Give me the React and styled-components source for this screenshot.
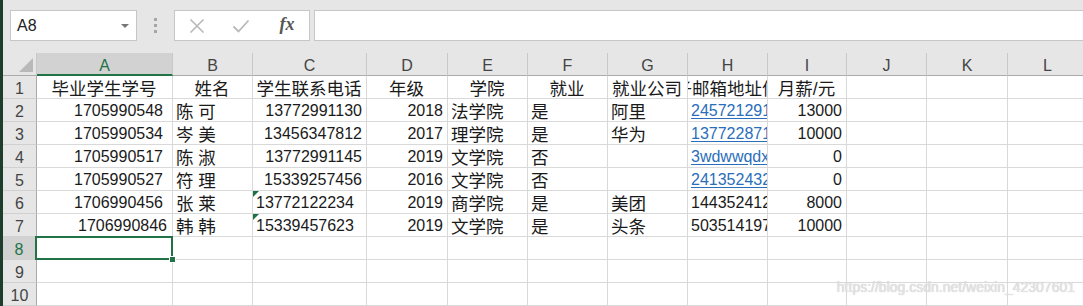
import React from 'react'
import styled, { createGlobalStyle } from 'styled-components'

const GlobalStyle = createGlobalStyle`
  html, body {
    margin: 0;
    padding: 0;
    background: #ffffff;
  }
  body {
    font-family: 'Liberation Sans', 'Noto Sans CJK SC', sans-serif;
    overflow: hidden;
  }
`

const COLUMNS = [
  { key: 'A', width: 136 },
  { key: 'B', width: 80 },
  { key: 'C', width: 114 },
  { key: 'D', width: 81 },
  { key: 'E', width: 80 },
  { key: 'F', width: 80 },
  { key: 'G', width: 80 },
  { key: 'H', width: 80 },
  { key: 'I', width: 79 },
  { key: 'J', width: 80 },
  { key: 'K', width: 81 },
  { key: 'L', width: 80 },
]

const c = (t, a = 'l', extra = {}) => ({ t, a, ...extra })

const ROWS = [
  [
    c('毕业学生学号', 'c', { cjk: true }),
    c('姓名', 'c', { cjk: true }),
    c('学生联系电话', 'c', { cjk: true }),
    c('年级', 'c', { cjk: true }),
    c('学院', 'c', { cjk: true }),
    c('就业', 'c', { cjk: true }),
    c('就业公司', 'c', { cjk: true }),
    c('电子邮箱地址信息', 'c', { cjk: true }),
    c('月薪/元', 'c', { cjk: true }),
  ],
  [
    c('1705990548', 'r', { pad: 9 }),
    c('陈 可', 'l', { cjk: true }),
    c('13772991130', 'r'),
    c('2018', 'r'),
    c('法学院', 'l', { cjk: true }),
    c('是', 'l', { cjk: true }),
    c('阿里', 'l', { cjk: true }),
    c('2457212913@qq.com', 'l', { link: true }),
    c('13000', 'r'),
  ],
  [
    c('1705990534', 'r', { pad: 9 }),
    c('岑 美', 'l', { cjk: true }),
    c('13456347812', 'r'),
    c('2017', 'r'),
    c('理学院', 'l', { cjk: true }),
    c('是', 'l', { cjk: true }),
    c('华为', 'l', { cjk: true }),
    c('1377228713@qq.com', 'l', { link: true }),
    c('10000', 'r'),
  ],
  [
    c('1705990517', 'r', { pad: 9 }),
    c('陈 淑', 'l', { cjk: true }),
    c('13772991145', 'r'),
    c('2019', 'r'),
    c('文学院', 'l', { cjk: true }),
    c('否', 'l', { cjk: true }),
    c(''),
    c('3wdwwqdx@qq.com', 'l', { link: true }),
    c('0', 'r'),
  ],
  [
    c('1705990527', 'r', { pad: 9 }),
    c('符 理', 'l', { cjk: true }),
    c('15339257456', 'r'),
    c('2016', 'r'),
    c('文学院', 'l', { cjk: true }),
    c('否', 'l', { cjk: true }),
    c(''),
    c('2413524323@qq.com', 'l', { link: true }),
    c('0', 'r'),
  ],
  [
    c('1706990456', 'r', { pad: 9 }),
    c('张 莱', 'l', { cjk: true }),
    c('13772122234', 'l', { flag: true }),
    c('2019', 'r'),
    c('商学院', 'l', { cjk: true }),
    c('是', 'l', { cjk: true }),
    c('美团', 'l', { cjk: true }),
    c('1443524123@qq.com', 'l'),
    c('8000', 'r'),
  ],
  [
    c('1706990846', 'r', { pad: 5 }),
    c('韩 韩', 'l', { cjk: true }),
    c('15339457623', 'l', { flag: true }),
    c('2019', 'r'),
    c('文学院', 'l', { cjk: true }),
    c('是', 'l', { cjk: true }),
    c('头条', 'l', { cjk: true }),
    c('5035141972@qq.com', 'l'),
    c('10000', 'r'),
  ],
  [], [], [],
]

const JUSTIFY = { l: 'flex-start', c: 'center', r: 'flex-end' }

const App = () => {
  return (
    <Window>
      <GlobalStyle />
      <Edge />
      <Main>
        <FormulaBar>
          <NameBox>
            <span>A8</span>
            <DropArrow />
          </NameBox>
          <Grip>
            <i /><i /><i />
          </Grip>
          <FormulaTools>
            <ToolIcon>
              <svg width='16' height='14' viewBox='0 0 16 14'>
                <path d='M1.5 0.5 L14.5 13.5 M14.5 0.5 L1.5 13.5' stroke='#b9b9b9' strokeWidth='1.6' fill='none' />
              </svg>
            </ToolIcon>
            <ToolIcon>
              <svg width='18' height='14' viewBox='0 0 18 14'>
                <path d='M1.5 7.5 L6.5 12.5 L16.5 1.5' stroke='#b9b9b9' strokeWidth='1.8' fill='none' />
              </svg>
            </ToolIcon>
            <Fx>fx</Fx>
          </FormulaTools>
          <FormulaInput />
        </FormulaBar>

        <Sheet>
          <Corner />
          {COLUMNS.map((col) => (
            <ColHead key={col.key} $active={col.key === 'A'}>
              {col.key}
            </ColHead>
          ))}
          {ROWS.map((row, ri) => (
            <React.Fragment key={ri}>
              <RowHead $active={ri === 7}>{ri + 1}</RowHead>
              {COLUMNS.map((col, ci) => {
                const cell = row[ci] || { t: '', a: 'l' }
                return (
                  <Cell
                    key={col.key}
                    $align={JUSTIFY[cell.a]}
                    $cjk={cell.cjk}
                    $pad={cell.pad}
                    $flag={cell.flag}
                    $selected={ri === 7 && ci === 0}
                  >
                    {cell.link ? <Link>{cell.t}</Link> : <span>{cell.t}</span>}
                  </Cell>
                )
              })}
            </React.Fragment>
          ))}
        </Sheet>
        <Watermark>https://blog.csdn.net/weixin_42307601</Watermark>
      </Main>
    </Window>
  )
}

const Window = styled.div`
  display: flex;
  width: 1083px;
  height: 306px;
  overflow: hidden;
  background: #ffffff;
`

const Edge = styled.div`
  width: 3px;
  flex: none;
  background: #1f3d2c;
`

const Main = styled.div`
  flex: 1;
  min-width: 0;
  display: flex;
  flex-direction: column;
  position: relative;
`

const FormulaBar = styled.div`
  height: 53px;
  box-sizing: border-box;
  padding: 10px 0 0 7px;
  display: flex;
  align-items: flex-start;
  background: #e6e6e6;
`

const NameBox = styled.div`
  width: 127px;
  height: 31px;
  box-sizing: border-box;
  border: 1px solid #c6c6c6;
  background: #ffffff;
  display: flex;
  align-items: center;
  justify-content: space-between;
  padding: 0 7px 0 6px;
  font-size: 16px;
  color: #222;
`

const DropArrow = styled.span`
  width: 0;
  height: 0;
  border-left: 4px solid transparent;
  border-right: 4px solid transparent;
  border-top: 4px solid #777;
`

const Grip = styled.div`
  width: 37px;
  height: 31px;
  display: flex;
  flex-direction: column;
  align-items: center;
  justify-content: center;
  gap: 3px;

  i {
    width: 3px;
    height: 3px;
    background: #a6a6a6;
  }
`

const FormulaTools = styled.div`
  width: 136px;
  height: 31px;
  box-sizing: border-box;
  border: 1px solid #c6c6c6;
  background: #ffffff;
  margin-right: 4px;
  display: grid;
  grid-template-columns: repeat(3, 44px);
  align-items: center;
  justify-items: center;
`

const ToolIcon = styled.span`
  display: flex;
  justify-content: center;
`

const Fx = styled.span`
  font-family: 'Liberation Serif', serif;
  font-style: italic;
  font-weight: bold;
  font-size: 18px;
  color: #555;
  padding: 0 0 3px 4px;
`

const FormulaInput = styled.div`
  flex: 1;
  height: 31px;
  box-sizing: border-box;
  border: 1px solid #c6c6c6;
  border-right: none;
  background: #ffffff;
`

const Sheet = styled.div`
  display: grid;
  grid-template-columns: 34px ${COLUMNS.map((col) => col.width + 'px').join(' ')};
  grid-auto-rows: 23px;
`

const Corner = styled.div`
  position: relative;
  background: #e6e6e6;
  border-right: 1px solid #c8c8c8;
  border-bottom: 1px solid #ababab;
  box-sizing: border-box;

  &::after {
    content: '';
    position: absolute;
    right: 3px;
    bottom: 3px;
    border-left: 14px solid transparent;
    border-bottom: 14px solid #b9b9b9;
  }
`

const ColHead = styled.div`
  box-sizing: border-box;
  display: flex;
  align-items: center;
  justify-content: center;
  padding-top: 4px;
  font-size: 16px;
  color: ${(p) => (p.$active ? '#217346' : '#444')};
  background: ${(p) => (p.$active ? '#d2d2d2' : '#e6e6e6')};
  border-right: 1px solid #c8c8c8;
  border-bottom: ${(p) => (p.$active ? '2px solid #217346' : '1px solid #ababab')};
`

const RowHead = styled.div`
  box-sizing: border-box;
  display: flex;
  align-items: center;
  justify-content: center;
  padding-top: 3px;
  font-size: 16px;
  color: ${(p) => (p.$active ? '#217346' : '#444')};
  background: ${(p) => (p.$active ? '#d2d2d2' : '#e6e6e6')};
  border-right: ${(p) => (p.$active ? '2px solid #217346' : '1px solid #ababab')};
  border-bottom: 1px solid #d0d0d0;
`

const Cell = styled.div`
  position: relative;
  box-sizing: border-box;
  display: flex;
  align-items: center;
  justify-content: ${(p) => p.$align};
  padding: 1px ${(p) => (p.$pad ? p.$pad : 4)}px 0 3px;
  overflow: hidden;
  white-space: nowrap;
  font-size: ${(p) => (p.$cjk ? '17.5px' : '16px')};
  color: #1a1a1a;
  border-right: 1px solid #d9d9d9;
  border-bottom: 1px solid #d9d9d9;
  ${(p) => p.$selected && `overflow: visible; z-index: 2;`}

  &::before {
    content: '';
    display: ${(p) => (p.$flag ? 'block' : 'none')};
    position: absolute;
    top: 0;
    left: 0;
    border-top: 6px solid #1e7145;
    border-right: 6px solid transparent;
  }

  &::after {
    content: '';
    display: ${(p) => (p.$selected ? 'block' : 'none')};
    position: absolute;
    inset: -1px -1px -1px -2px;
    border: 2px solid #217346;
  }

  ${(p) =>
    p.$selected &&
    `
    & > span::after {
      content: '';
      position: absolute;
      right: -4px;
      bottom: -4px;
      width: 5px;
      height: 5px;
      background: #217346;
      border: 1px solid #ffffff;
      z-index: 3;
    }
  `}
`

const Link = styled.span`
  color: #2a6ebb;
  text-decoration: underline;
  text-underline-offset: 2px;
`

const Watermark = styled.div`
  position: absolute;
  right: 8px;
  bottom: 11px;
  font-size: 14px;
  color: #e4e4e4;
  text-shadow: 0 0 1px #bdbdbd;
  pointer-events: none;
`

export default App
